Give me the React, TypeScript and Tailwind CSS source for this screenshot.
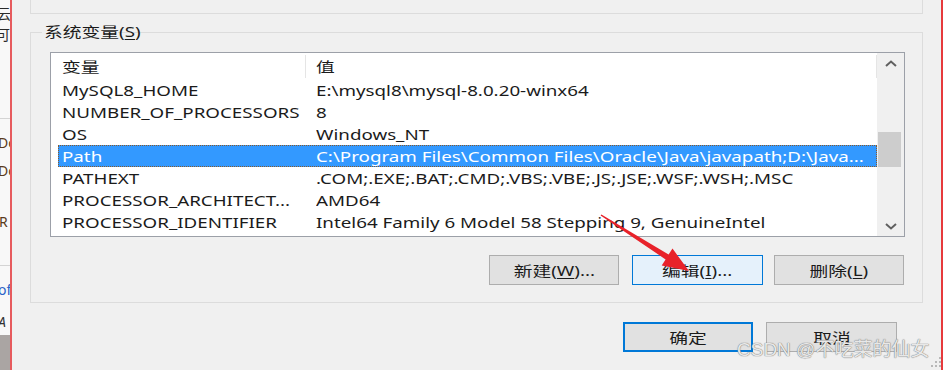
import React from "react";

const FONT = "[font-family:'Noto_Sans','Noto_Sans_CJK_SC',sans-serif]";

function T({ children, center }: { children: React.ReactNode; center?: boolean }) {
  return (
    <span
      className={
        center
          ? "inline-block whitespace-nowrap origin-center scale-x-[1.34]"
          : "inline-block whitespace-nowrap origin-left scale-x-[1.34]"
      }
    >
      {children}
    </span>
  );
}

const rows: [string, string, boolean?][] = [
  ["MySQL8_HOME", "E:\\mysql8\\mysql-8.0.20-winx64"],
  ["NUMBER_OF_PROCESSORS", "8"],
  ["OS", "Windows_NT"],
  ["Path", "C:\\Program Files\\Common Files\\Oracle\\Java\\javapath;D:\\Java...", true],
  ["PATHEXT", ".COM;.EXE;.BAT;.CMD;.VBS;.VBE;.JS;.JSE;.WSF;.WSH;.MSC"],
  ["PROCESSOR_ARCHITECT...", "AMD64"],
  ["PROCESSOR_IDENTIFIER", "Intel64 Family 6 Model 58 Stepping 9, GenuineIntel"],
];

function Btn({
  children,
  variant,
  className,
}: {
  children: React.ReactNode;
  variant?: "hover" | "default";
  className?: string;
}) {
  let cls = "h-[30px] flex items-center justify-center text-[14px] text-[#1b1b1b] ";
  if (variant === "hover") cls += "bg-[#e5f1fb] border border-[#0078d7] ";
  else if (variant === "default") cls += "bg-[#e1e1e1] border-2 border-[#0078d7] ";
  else cls += "bg-[#e1e1e1] border border-[#adadad] ";
  return <div className={cls + (className || "")}>{children}</div>;
}

function Chevron({ up }: { up?: boolean }) {
  return (
    <svg width="12" height="7" viewBox="0 0 12 7">
      <polyline
        points={up ? "1,6 6,1.5 11,6" : "1,1 6,5.5 11,1"}
        fill="none"
        stroke="#606060"
        strokeWidth="2"
      />
    </svg>
  );
}

export default function App() {
  return (
    <div className={`relative w-[943px] h-[370px] overflow-hidden bg-[#f0f0f0] flex ${FONT}`}>
      {/* window behind, left strip */}
      <div className="w-[10px] shrink-0 flex flex-col overflow-hidden bg-[#f8f8f8] text-[14px] leading-[20px]">
        <div className="h-[118px] flex flex-col pt-[4px] text-[#2a2a2a]">
          <div className="-ml-[3px]">云</div>
          <div className="-ml-[4px] mt-[1px]">可</div>
        </div>
        <div className="h-px bg-[#d4d4d4]" />
        <div className="h-[146px] flex flex-col text-[#5a3a20]">
          <div className="mt-[14px] -ml-[2px]">Do</div>
          <div className="mt-[8px] -ml-[2px]">Do</div>
          <div className="mt-[31px] -ml-[1px]">R</div>
        </div>
        <div className="h-px bg-[#d4d4d4]" />
        <div className="h-[69px] flex flex-col">
          <div className="mt-[14px] -ml-[2px] text-[#2a62c8]">of</div>
          <div className="mt-[12px] -ml-[2px] italic text-[#333]">A</div>
        </div>
        <div className="flex-1 bg-[#aaa5a3]" />
      </div>
      <div className="w-[2px] shrink-0 bg-[#e65a5d]" />

      {/* main dialog */}
      <div className="flex-1 flex flex-col px-[18px]">
        <div className="h-[14px] border-x border-b border-[#dcdcdc]" />

        <div className="relative mt-[18px] h-[271px] border border-[#dcdcdc] flex flex-col pt-[19px] pl-[19px] pr-[17px]">
          <div className="absolute -top-[11px] left-[11px] px-[2px] bg-[#f0f0f0] text-[14px] leading-[20px] text-[#1b1b1b]">
            <T>
              系统变量(<span className="underline underline-offset-2">S</span>)
            </T>
          </div>

          {/* list view */}
          <div className="h-[185px] border border-[#9ca0a8] bg-white flex text-[14px] text-[#1b1b1b]">
            <div className="flex-1 flex flex-col overflow-hidden">
              <div className="h-[26px] shrink-0 flex ml-[7px]">
                <div className="w-[247px] flex items-center pl-[4px]">
                  <T>变量</T>
                </div>
                <div className="w-px mt-[2px] mb-[1px] bg-[#e5e5e5]" />
                <div className="flex-1 flex items-center pl-[10px]">
                  <T>值</T>
                </div>
                <div className="w-px mt-[2px] mb-[1px] bg-[#e5e5e5]" />
              </div>
              {rows.map(([k, v, sel]) => (
                <div
                  key={k}
                  className={
                    sel
                      ? "h-[22px] shrink-0 flex items-center ml-[7px] bg-[#3399ff] text-white outline-1 outline-dotted outline-[#8a5a2a] -outline-offset-1"
                      : "h-[22px] shrink-0 flex items-center ml-[7px]"
                  }
                >
                  <div className="w-[247px] pl-[4px]">
                    <T>{k}</T>
                  </div>
                  <div className="flex-1 pl-[11px]">
                    <T>{v}</T>
                  </div>
                </div>
              ))}
            </div>
            {/* scrollbar */}
            <div className="w-[27px] shrink-0 bg-[#f0f0f0] flex flex-col">
              <div className="h-[21px] flex items-center justify-center">
                <Chevron up />
              </div>
              <div className="flex-1">
                <div className="mt-[58px] ml-px w-[23px] h-[35px] bg-[#cdcdcd]" />
              </div>
              <div className="h-[19px] flex items-center justify-center">
                <Chevron />
              </div>
            </div>
          </div>

          {/* buttons */}
          <div className="mt-[18px] flex justify-end pr-px">
            <Btn className="w-[130px]">
              <T center>
                新建(<span className="underline underline-offset-2">W</span>)...
              </T>
            </Btn>
            <Btn variant="hover" className="w-[131px] ml-[13px]">
              <T center>
                编辑(<span className="underline underline-offset-2">I</span>)...
              </T>
            </Btn>
            <Btn className="w-[130px] ml-[11px]">
              <T center>
                删除(<span className="underline underline-offset-2">L</span>)
              </T>
            </Btn>
          </div>
        </div>

        <div className="mt-[19px] flex justify-end pr-[26px]">
          <Btn variant="default" className="w-[130px] h-[29px]">
            <T center>确定</T>
          </Btn>
          <Btn className="w-[131px] h-[29px] ml-[13px]">
            <T center>取消</T>
          </Btn>
        </div>
      </div>

      <div className="w-[2px] shrink-0 bg-[#e6393c]" />

      {/* red arrow annotation */}
      <svg
        className="absolute left-0 top-0 pointer-events-none"
        width="943"
        height="370"
        viewBox="0 0 943 370"
      >
        <polygon
          points="600.6,215.6 601.4,214.4 668.6,254.6 672.5,248.6 689,271 661.7,265.4 665.6,259.4"
          fill="#e8222a"
        />
        <g fill="#b8b8b8">
          <rect x="939" y="357" width="2" height="2" />
          <rect x="935" y="361" width="2" height="2" />
          <rect x="939" y="361" width="2" height="2" />
          <rect x="931" y="365" width="2" height="2" />
          <rect x="935" y="365" width="2" height="2" />
          <rect x="939" y="365" width="2" height="2" />
        </g>
      </svg>

      {/* watermark */}
      <div className="absolute left-[737px] top-[340px] text-[19px] leading-[20px] whitespace-nowrap text-[#e8e8e8] [text-shadow:0_0_1px_#7a7a7a,0_0_1px_#7a7a7a] [font-family:'Liberation_Sans','Noto_Sans_CJK_SC',sans-serif]">
        CSDN @不吃菜的仙女
      </div>
    </div>
  );
}
